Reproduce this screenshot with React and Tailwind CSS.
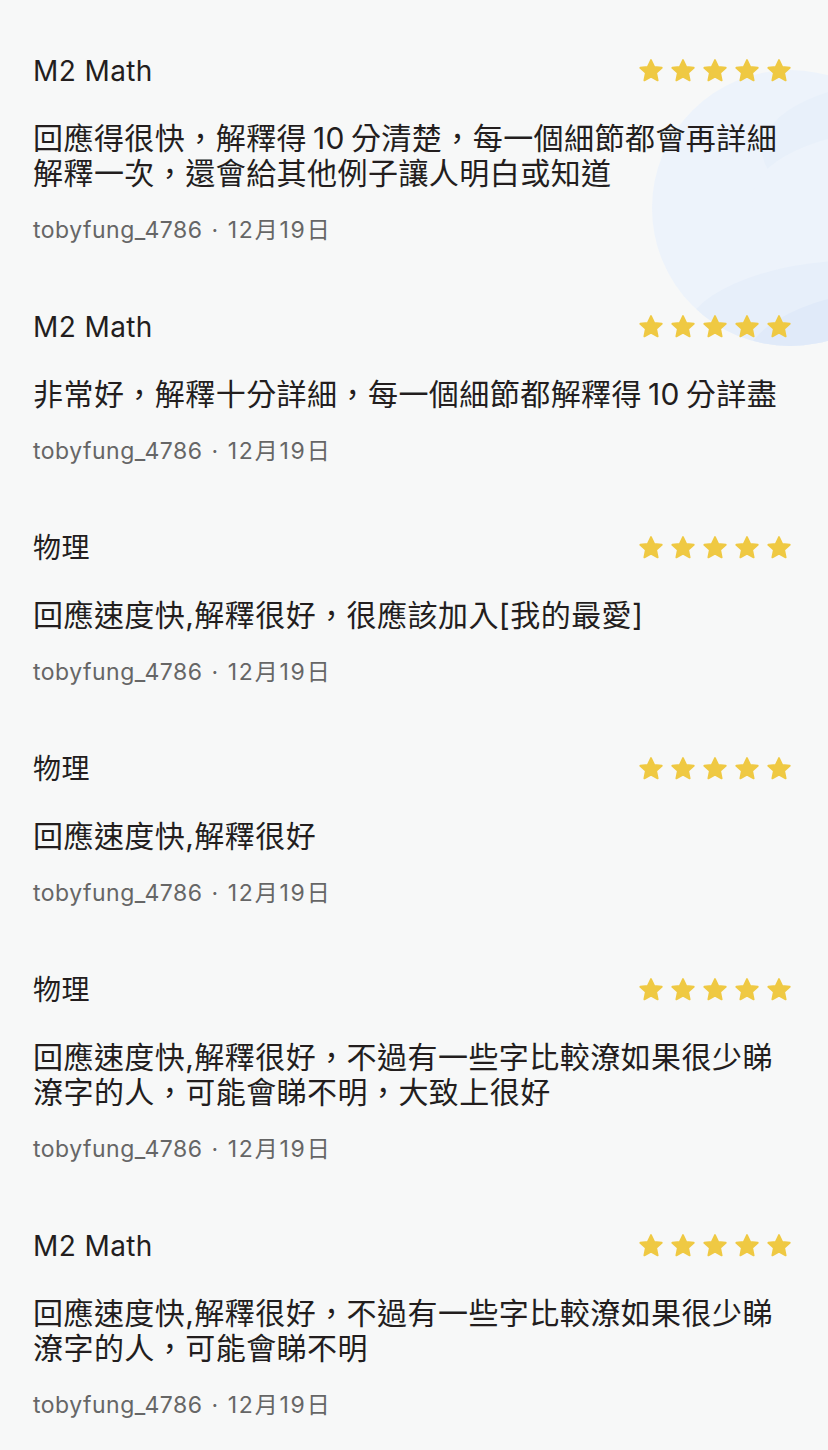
const reviews = [
  {
    title: "M2 Math",
    body: "回應得很快，解釋得\u200910\u2009分清楚，每一個細節都會再詳細解釋一次，還會給其他例子讓人明白或知道",
  },
  {
    title: "M2 Math",
    body: "非常好，解釋十分詳細，每一個細節都解釋得\u200910\u2009分詳盡",
  },
  { title: "物理", body: "回應速度快,解釋很好，很應該加入[我的最愛]" },
  { title: "物理", body: "回應速度快,解釋很好" },
  {
    title: "物理",
    body: "回應速度快,解釋很好，不過有一些字比較潦如果很少睇潦字的人，可能會睇不明，大致上很好",
  },
  {
    title: "M2 Math",
    body: "回應速度快,解釋很好，不過有一些字比較潦如果很少睇潦字的人，可能會睇不明",
  },
];

function Star() {
  return (
    <svg width="28" height="28" viewBox="0 0 24 24">
      <path
        d="M12 2.6l2.75 5.9 6.45.75-4.78 4.4 1.28 6.37L12 16.85 6.3 20.02l1.28-6.37L2.8 9.25l6.45-.75z"
        fill="#efc943"
        stroke="#efc943"
        strokeWidth="1.6"
        strokeLinejoin="round"
      />
    </svg>
  );
}

function Blob() {
  return (
    <svg
      className="pointer-events-none absolute left-[652px] top-[70px]"
      width="276"
      height="276"
      viewBox="0 0 276 276"
    >
      <defs>
        <clipPath id="c">
          <circle cx="138" cy="138" r="138" />
        </clipPath>
      </defs>
      <g clipPath="url(#c)">
        <rect width="276" height="276" fill="#edf3fb" />
        <ellipse cx="260" cy="80" rx="150" ry="70" fill="#e8f0fa" />
        <ellipse cx="250" cy="130" rx="150" ry="70" fill="#edf3fb" />
        <ellipse cx="210" cy="270" rx="180" ry="80" fill="#e7effa" />
        <ellipse cx="250" cy="300" rx="160" ry="80" fill="#e0eaf9" />
      </g>
    </svg>
  );
}

export default function App() {
  return (
    <div
      className="relative min-h-[1450px] overflow-hidden bg-[#f7f8f8] pl-[33px] pr-[35px] pt-[51px] text-[#231e1e]"
      style={{ fontFamily: 'Inter, "Noto Sans CJK TC", sans-serif' }}
    >
      <Blob />
      <div className="relative">
        {reviews.map((r, i) => (
          <div key={i} className="pb-[62px]">
            <div className="flex h-[40px] items-center justify-between">
              <h3 className="text-[28px] leading-[40px] tracking-[0.4px]">{r.title}</h3>
              <div className="flex gap-[4px]">
                {[0, 1, 2, 3, 4].map((s) => (
                  <Star key={s} />
                ))}
              </div>
            </div>
            <p className="mt-[30px] text-[30px] leading-[35px] tracking-[0.45px]">
              {r.body}
            </p>
            <p className="mt-[24px] text-[23px] leading-[30px] tracking-[0.5px] text-[#666666]">
              tobyfung_4786<span className="mx-[9px]">·</span>
              <span className="tracking-[1.8px]">12月19日</span>
            </p>
          </div>
        ))}
      </div>
    </div>
  );
}
